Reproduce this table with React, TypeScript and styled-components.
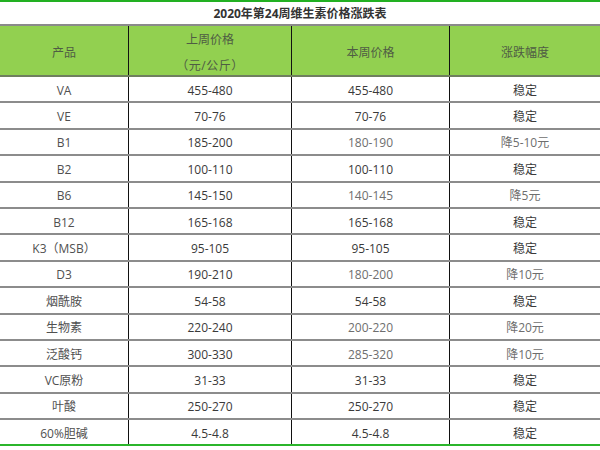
import React from 'react';
import styled, { createGlobalStyle } from 'styled-components';

const GlobalStyle = createGlobalStyle`
  html, body {
    margin: 0;
    padding: 0;
    background: #ffffff;
  }
  body {
    font-family: "Open Sans", "Noto Sans CJK SC", sans-serif;
  }
`;

const Table = styled.div`
  width: 600px;
  border-top: 2px solid #22b022;
  display: flex;
  flex-direction: column;
`;

const Title = styled.div`
  height: 22px;
  border-bottom: 2px solid #8a8a8a;
  display: flex;
  align-items: center;
  justify-content: center;
  font-size: 12px;
  font-weight: 700;
  color: #333333;
`;

const Row = styled.div<{ $head?: boolean; $last?: boolean }>`
  display: grid;
  grid-template-columns: 128px 163px 158px 1fr;
  height: ${(p) => (p.$head ? '49px' : '24.4px')};
  background: ${(p) => (p.$head ? '#92d050' : '#ffffff')};
  border-bottom: 2px solid
    ${(p) => (p.$head ? '#6f7f5f' : p.$last ? '#2bb52b' : '#8c8c8c')};
`;

const Cell = styled.div<{ $tone?: 'name' | 'value' | 'changed' | 'head' }>`
  display: flex;
  flex-direction: column;
  align-items: center;
  justify-content: center;
  padding-top: ${(p) => (p.$tone === 'head' ? '4px' : '3px')};
  font-size: 12px;
  line-height: 16px;
  color: ${(p) =>
    p.$tone === 'changed'
      ? '#6e6e6e'
      : p.$tone === 'name'
      ? '#505050'
      : p.$tone === 'head'
      ? '#4f5c44'
      : '#3a3a3a'};
  & + & {
    border-left: 1px solid #111111;
  }
`;

const HeadLine = styled.span<{ $gap?: boolean }>`
  margin-top: ${(p) => (p.$gap ? '10px' : '0')};
  letter-spacing: ${(p) => (p.$gap ? '0.5px' : '0')};
`;

interface Item {
  name: string;
  last: string;
  now: string;
  change: string;
}

const items: Item[] = [
  { name: 'VA', last: '455-480', now: '455-480', change: '稳定' },
  { name: 'VE', last: '70-76', now: '70-76', change: '稳定' },
  { name: 'B1', last: '185-200', now: '180-190', change: '降5-10元' },
  { name: 'B2', last: '100-110', now: '100-110', change: '稳定' },
  { name: 'B6', last: '145-150', now: '140-145', change: '降5元' },
  { name: 'B12', last: '165-168', now: '165-168', change: '稳定' },
  { name: 'K3（MSB）', last: '95-105', now: '95-105', change: '稳定' },
  { name: 'D3', last: '190-210', now: '180-200', change: '降10元' },
  { name: '烟酰胺', last: '54-58', now: '54-58', change: '稳定' },
  { name: '生物素', last: '220-240', now: '200-220', change: '降20元' },
  { name: '泛酸钙', last: '300-330', now: '285-320', change: '降10元' },
  { name: 'VC原粉', last: '31-33', now: '31-33', change: '稳定' },
  { name: '叶酸', last: '250-270', now: '250-270', change: '稳定' },
  { name: '60%胆碱', last: '4.5-4.8', now: '4.5-4.8', change: '稳定' },
];

export default function App() {
  return (
    <>
      <GlobalStyle />
      <Table>
        <Title>2020年第24周维生素价格涨跌表</Title>
        <Row $head>
          <Cell $tone="head">产品</Cell>
          <Cell $tone="head">
            <span>上周价格</span>
            <HeadLine $gap>（元/公斤）</HeadLine>
          </Cell>
          <Cell $tone="head">本周价格</Cell>
          <Cell $tone="head">涨跌幅度</Cell>
        </Row>
        {items.map((it, i) => {
          const moved = it.change !== '稳定';
          return (
            <Row key={it.name} $last={i === items.length - 1}>
              <Cell $tone="name">{it.name}</Cell>
              <Cell $tone="value">{it.last}</Cell>
              <Cell $tone={moved ? 'changed' : 'value'}>{it.now}</Cell>
              <Cell $tone={moved ? 'changed' : 'value'}>{it.change}</Cell>
            </Row>
          );
        })}
      </Table>
    </>
  );
}
